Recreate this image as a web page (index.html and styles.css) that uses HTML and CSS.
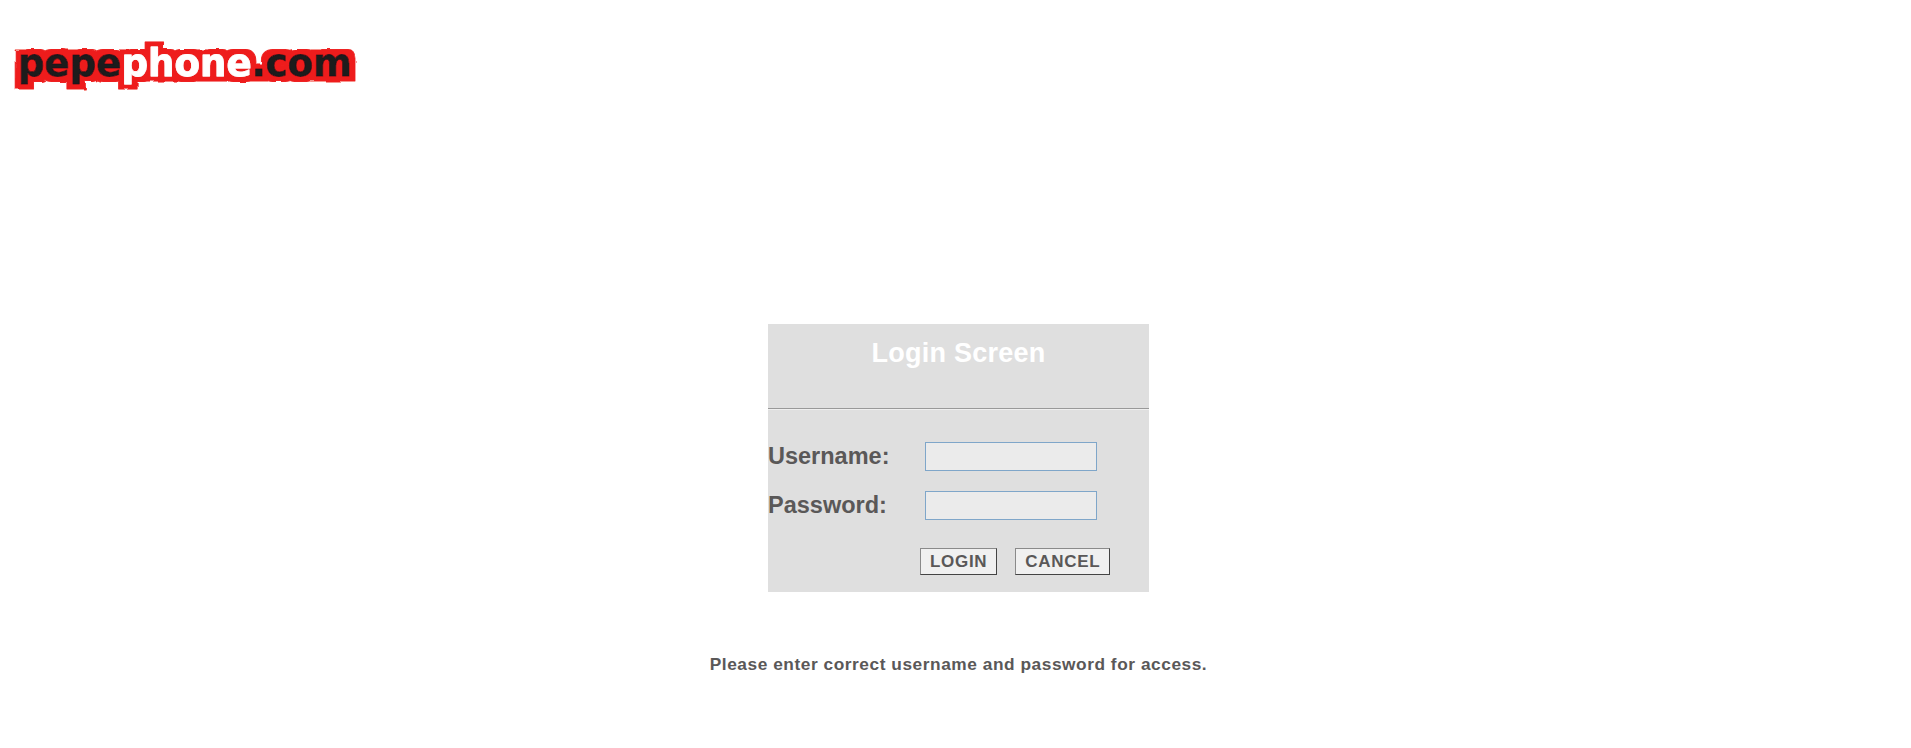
FILE: index.html
```html
<!DOCTYPE html>
<html lang="en">
<head>
<meta charset="utf-8">
<title>Login Screen</title>
<link rel="stylesheet" href="styles.css">
</head>
<body>
<header class="brand">
  <svg class="logo" width="370" height="70" viewBox="0 0 370 70" role="img" aria-label="pepephone.com">
    <defs>
      <filter id="halo" x="-5%" y="-30%" width="110%" height="160%">
        <feMorphology in="SourceAlpha" operator="dilate" radius="5.5 5" result="fat"/>
        <feTurbulence type="fractalNoise" baseFrequency="0.09" numOctaves="2" seed="4" result="noise"/>
        <feDisplacementMap in="fat" in2="noise" scale="3" result="rough"/>
        <feFlood flood-color="#ee1f1c"/>
        <feComposite in2="rough" operator="in" result="red"/>
        <feGaussianBlur in="SourceGraphic" stdDeviation="0.35" result="soft"/>
        <feMerge>
          <feMergeNode in="red"/>
          <feMergeNode in="soft"/>
        </feMerge>
      </filter>
    </defs>
    <text class="logo-text" filter="url(#halo)" x="18" y="45" textLength="334" lengthAdjust="spacingAndGlyphs"><tspan class="dark">pepe</tspan><tspan class="light">phone</tspan><tspan class="dark">.com</tspan></text>
  </svg>
</header>
<main class="content">
  <form class="panel">
    <h1 class="title">Login Screen</h1>
    <hr class="rule">
    <div class="fields">
      <label class="label" for="user">Username:</label>
      <input class="input" id="user" type="text">
      <label class="label" for="pass">Password:</label>
      <input class="input" id="pass" type="password">
    </div>
    <div class="actions">
      <button class="btn" type="button">LOGIN</button>
      <button class="btn" type="button">CANCEL</button>
    </div>
  </form>
  <p class="note">Please enter correct username and password for access.</p>
</main>
</body>
</html>
```
FILE: styles.css
```css
html, body {
  margin: 0;
  padding: 0;
  background: #fff;
}
body {
  height: 748px;
  overflow: hidden;
  font-family: "Liberation Sans", Arial, sans-serif;
  color: #5a5858;
}
.brand {
  height: 324px;
  padding-top: 31px;
  box-sizing: border-box;
}
.logo {
  display: block;
}
.logo-text {
  font-family: "DejaVu Sans", sans-serif;
  font-weight: 700;
  font-size: 37px;
  stroke-width: 0.8px;
  stroke-linejoin: round;
}
.dark {
  fill: #1c1a1c;
  stroke: #1c1a1c;
}
.light {
  fill: #fff;
  stroke: #fff;
}
.content {
  display: flex;
  flex-direction: column;
  align-items: center;
  padding-left: 6px;
}
.panel {
  width: 381px;
  height: 268px;
  background: #dfdfdf;
  box-sizing: border-box;
}
.title {
  margin: 0;
  padding-top: 13px;
  height: 84px;
  box-sizing: border-box;
  text-align: center;
  font-size: 27px;
  letter-spacing: 0.25px;
  line-height: 32px;
  font-weight: 700;
  color: #fff;
}
.rule {
  margin: 0;
  border: 0;
  height: 1px;
  background: #999;
  box-shadow: 0 1px 0 #efefef;
}
.fields {
  display: grid;
  grid-template-columns: 157px 172px;
  grid-auto-rows: 29px;
  row-gap: 20px;
  align-items: center;
  padding-top: 33px;
}
.label {
  font-size: 23.5px;
  font-weight: 700;
  color: #5a5858;
}
.input {
  width: 172px;
  height: 29px;
  box-sizing: border-box;
  margin: 0;
  padding: 0;
  background: #ebebeb;
  border: 1px solid #7fa6c9;
  border-radius: 0;
}
.actions {
  display: flex;
  gap: 18px;
  padding: 28px 0 0 152px;
}
.btn {
  height: 27px;
  margin: 0;
  padding: 0 9px;
  box-sizing: border-box;
  background: #f0f0f0;
  border: 1px solid;
  border-color: #8a8a8a #444 #444 #8a8a8a;
  border-radius: 0;
  font-family: "Liberation Sans", Arial, sans-serif;
  font-size: 17px;
  letter-spacing: 0.7px;
  font-weight: 700;
  color: #5a5858;
}
.note {
  margin: 62px 0 0;
  font-size: 17.3px;
  letter-spacing: 0.55px;
  line-height: 20px;
  font-weight: 700;
  color: #5a5858;
}
```
